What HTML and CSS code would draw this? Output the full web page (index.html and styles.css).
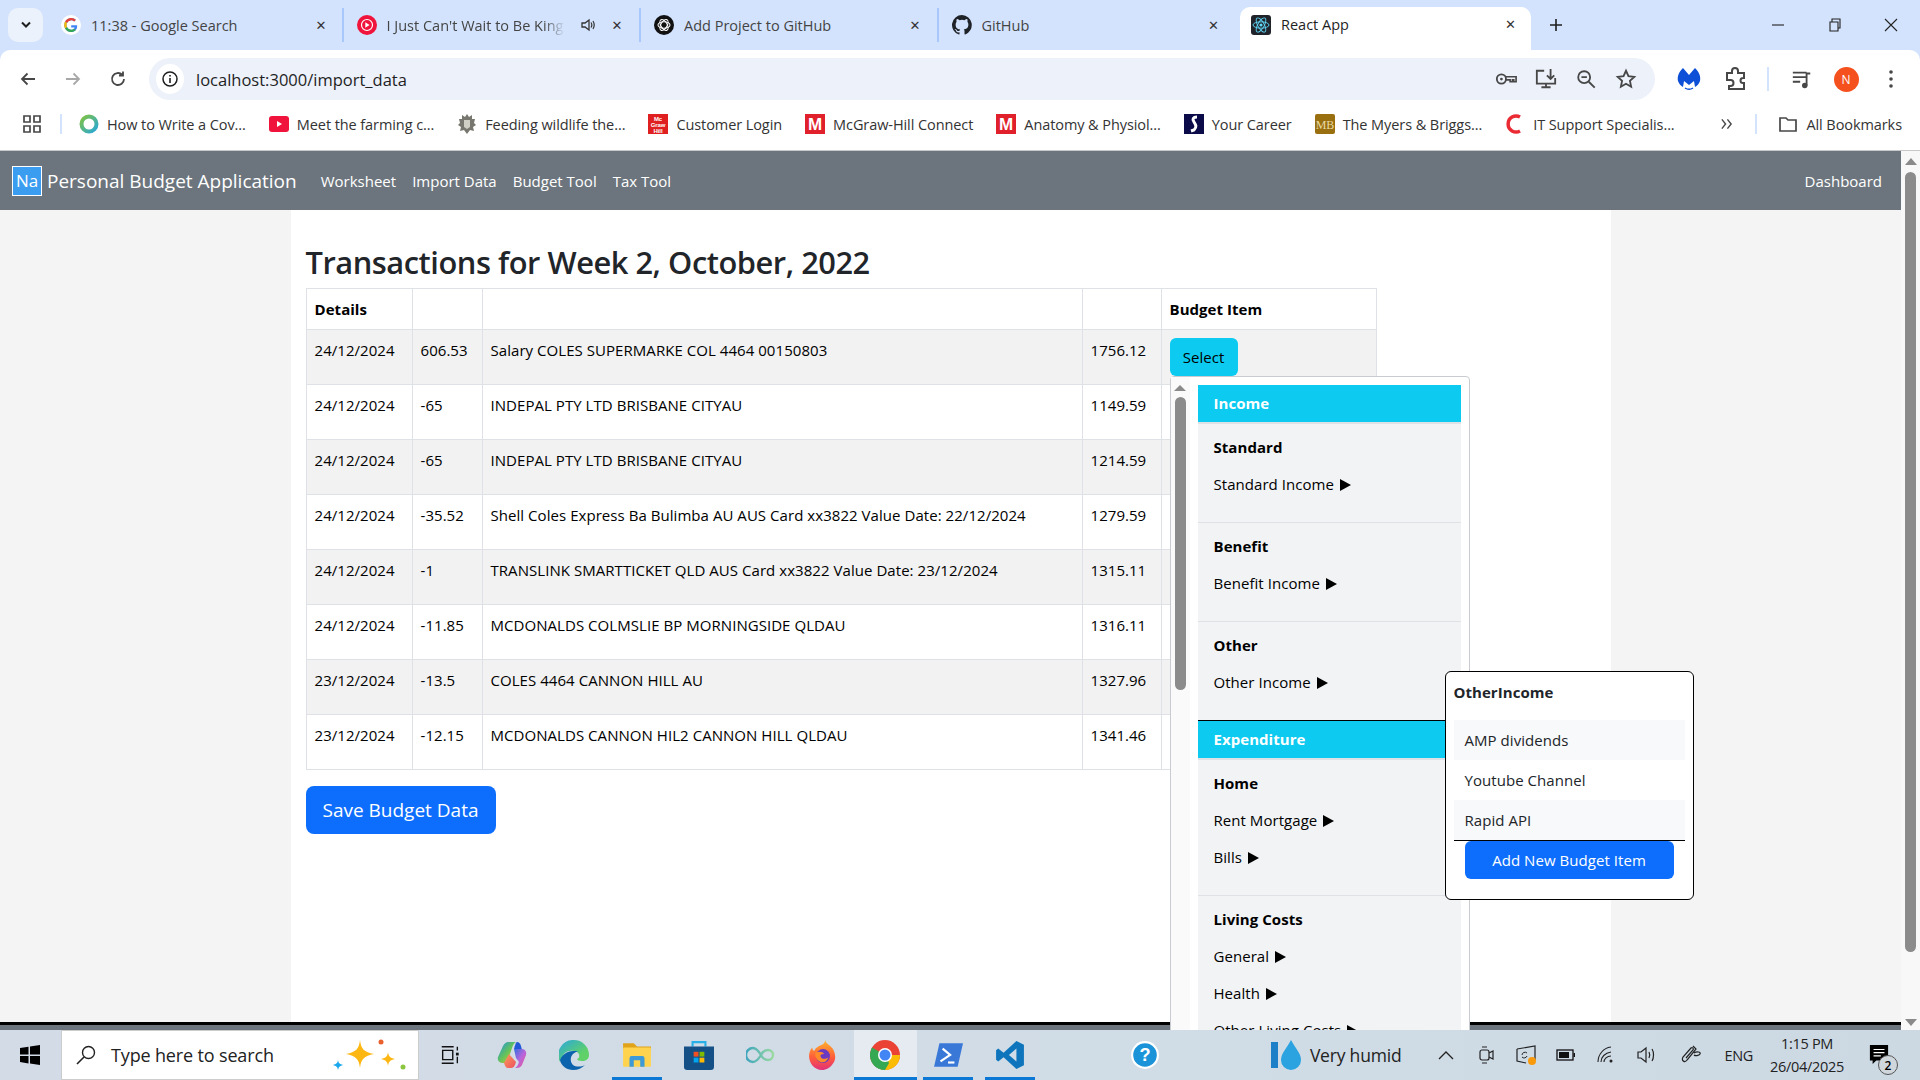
FILE: index.html
```html
<!DOCTYPE html>
<html lang="en">
<head>
  <meta charset="UTF-8">
  <title>React App</title>
  <link rel="stylesheet" href="styles.css">
</head>
<body>

<div class="tabstrip">
  <div class="tab-search"><svg width="12" height="8" viewBox="0 0 12 8"><path d="M2 1.500l4 4 4-4" fill="none" stroke="#1f1f1f" stroke-width="2"/></svg></div>
  <div class="tab">
    <svg class="fav" viewBox="0 0 20 20"><circle cx="10" cy="10" r="10" fill="#fff"/><path d="M16 10.200H10.200v2.200h3.400c-.4 1.500-1.700 2.300-3.400 2.300a4.700 4.700 0 1 1 3-8.300l1.700-1.600A7 7 0 1 0 10.200 17c3.600 0 6-2.500 6-6 0-.3 0-.6-.2-.8z" fill="#4285f4"/><path d="M4 6.500l2 1.500a4.700 4.700 0 0 1 7.200-1.600l1.700-1.600A7 7 0 0 0 4 6.500z" fill="#ea4335"/><path d="M4 13.500l2-1.500a4.700 4.700 0 0 0 7 1.800l1.800 1.500A7 7 0 0 1 4 13.500z" fill="#34a853"/><path d="M3.200 10c0-1.300.3-2.500.8-3.500l2 1.500a4.700 4.700 0 0 0 0 4l-2 1.500c-.5-1-.8-2.200-.8-3.500z" fill="#fbbc05"/></svg>
    <span class="tab-title">11:38 - Google Search</span><span class="tab-x">✕</span>
  </div>
  <div class="tab">
    <svg class="fav" viewBox="0 0 20 20"><circle cx="10" cy="10" r="10" fill="#f0143c"/><circle cx="10" cy="10" r="5.500" fill="none" stroke="#fff" stroke-width="1.200"/><path d="M8.300 7.200l4.300 2.800-4.300 2.800z" fill="#fff"/></svg>
    <span class="tab-title fade">I Just Can't Wait to Be King</span>
    <svg class="tab-sound" viewBox="0 0 16 16"><path d="M2 6h3l4-3v10l-4-3H2z" fill="none" stroke="#333" stroke-width="1.300"/><path d="M11 5.500c1 1.500 1 3.500 0 5M13 4c1.500 2.500 1.500 5.500 0 8" fill="none" stroke="#333" stroke-width="1.200"/></svg>
    <span class="tab-x">✕</span>
  </div>
  <div class="tab">
    <svg class="fav" viewBox="0 0 20 20"><circle cx="10" cy="10" r="10" fill="#111"/><g fill="none" stroke="#fff" stroke-width="1.100"><ellipse cx="10" cy="10" rx="6" ry="3.200"/><ellipse cx="10" cy="10" rx="6" ry="3.200" transform="rotate(60 10 10)"/><ellipse cx="10" cy="10" rx="6" ry="3.200" transform="rotate(120 10 10)"/></g></svg>
    <span class="tab-title">Add Project to GitHub</span><span class="tab-x">✕</span>
  </div>
  <div class="tab">
    <svg class="fav" viewBox="0 0 16 16"><path fill="#1f2328" d="M8 0a8 8 0 0 0-2.500 15.600c.4.100.5-.2.500-.4v-1.400c-2.200.5-2.700-1-2.700-1-.4-.9-.9-1.200-.9-1.200-.7-.5.100-.5.100-.5.800.1 1.200.8 1.200.8.700 1.200 1.900.9 2.300.7.100-.5.300-.9.500-1.100-1.800-.2-3.600-.9-3.600-4 0-.9.300-1.600.8-2.100-.1-.2-.4-1 .1-2.100 0 0 .7-.2 2.200.8a7.600 7.600 0 0 1 4 0c1.500-1 2.200-.8 2.200-.8.400 1.100.2 1.900.1 2.100.5.600.8 1.300.8 2.100 0 3.100-1.900 3.700-3.700 3.900.3.300.6.800.6 1.500v2.200c0 .2.100.5.600.4A8 8 0 0 0 8 0z"/></svg>
    <span class="tab-title">GitHub</span><span class="tab-x">✕</span>
  </div>
  <div class="tab tab-active">
    <svg class="fav" viewBox="0 0 20 20"><rect width="20" height="20" rx="3" fill="#20232a"/><g fill="none" stroke="#61dafb" stroke-width=".9"><ellipse cx="10" cy="10" rx="8" ry="3.200"/><ellipse cx="10" cy="10" rx="8" ry="3.200" transform="rotate(60 10 10)"/><ellipse cx="10" cy="10" rx="8" ry="3.200" transform="rotate(120 10 10)"/></g><circle cx="10" cy="10" r="1.600" fill="#61dafb"/></svg>
    <span class="tab-title">React App</span><span class="tab-x">✕</span>
  </div>
  <svg class="new-tab" viewBox="0 0 14 14"><path d="M7 1v12M1 7h12" stroke="#1f1f1f" stroke-width="1.600"/></svg>
  <div class="win-btns">
    <svg viewBox="0 0 14 14"><path d="M1 7h12" stroke="#222" stroke-width="1.100"/></svg>
    <svg viewBox="0 0 14 14"><path d="M2 4h8v9H2zM4 4V1h8v9h-2" fill="none" stroke="#222" stroke-width="1.100"/></svg>
    <svg viewBox="0 0 14 14"><path d="M1 1l12 12M13 1L1 13" stroke="#222" stroke-width="1.100"/></svg>
  </div>
</div>

<div class="toolbar">
  <svg class="tool-icon" viewBox="0 0 18 18"><path d="M16 9H3M8.500 3.500L3 9l5.500 5.500" fill="none" stroke="#474747" stroke-width="1.800"/></svg>
  <svg class="tool-icon" viewBox="0 0 18 18"><path d="M2 9h13M9.500 3.500L15 9l-5.500 5.500" fill="none" stroke="#a8a8a8" stroke-width="1.800"/></svg>
  <svg class="tool-icon" viewBox="0 0 18 18"><path d="M15 9a6 6 0 1 1-1.800-4.300M14 1.500v4h-4" fill="none" stroke="#474747" stroke-width="1.800"/></svg>
  <div class="omnibox">
    <div class="site-info"><svg width="18" height="18" viewBox="0 0 18 18"><circle cx="9" cy="9" r="7" fill="none" stroke="#1f1f1f" stroke-width="1.500"/><path d="M9 8v5M9 5v1.600" stroke="#1f1f1f" stroke-width="1.600"/></svg></div>
    <span class="url">localhost:3000/import_data</span>
    <div class="omni-icons">
      <svg viewBox="0 0 24 24"><circle cx="7" cy="12" r="5" fill="none" stroke="#474747" stroke-width="2"/><circle cx="7" cy="12" r="1.500" fill="#474747"/><path d="M12 9.500h11v5.500h-2.500v-2h-1.500v2h-2.500v-2H12" fill="none" stroke="#474747" stroke-width="1.800"/></svg>
      <svg viewBox="0 0 24 24"><path d="M10 3H2v14h20v-6M7 21h10M12 17v4M17 1v11M13 8l4 4 4-4" fill="none" stroke="#474747" stroke-width="2"/></svg>
      <svg viewBox="0 0 24 24"><circle cx="10" cy="10" r="6.500" fill="none" stroke="#474747" stroke-width="2"/><path d="M15 15l6.500 6.500M7 10h6" stroke="#474747" stroke-width="2"/></svg>
      <svg viewBox="0 0 24 24"><path d="M12 3l2.700 6 6.300.7-4.700 4.300 1.300 6.500-5.600-3.300-5.600 3.300 1.300-6.500L3 9.700 9.300 9z" fill="none" stroke="#474747" stroke-width="2"/></svg>
    </div>
  </div>
  <div class="ext-icons">
    <svg class="ext-mb" viewBox="0 0 24 24"><path d="M6 1C2 5 0 9 1 14c1 3 3 5 5 6l1-6 5 4 5-4 1 6c2-1 4-3 5-6 1-5-1-9-5-13l-6 7z" fill="#0d4fd6"/><path d="M8 21c3 2 5 2 8 0" fill="none" stroke="#0d4fd6" stroke-width="1.500"/></svg>
    <svg class="ext-puzzle" viewBox="0 0 24 24"><path d="M3 6h5V4a3 3 0 0 1 6 0v2h6v5h-1a2.500 2.500 0 0 0 0 5h1v6H5v-3h1.500a3 3 0 0 0 0-6H3z" fill="none" stroke="#474747" stroke-width="2"/></svg>
    <span class="tool-sep"></span>
    <svg class="ext-queue" viewBox="0 0 24 24"><path d="M2 5h15M2 10h15M2 15h8" stroke="#474747" stroke-width="2"/><circle cx="15" cy="19" r="3" fill="#474747"/><path d="M17 19V6h4" fill="none" stroke="#474747" stroke-width="2"/></svg>
    <span class="avatar">N</span>
    <svg class="ext-menu" viewBox="0 0 6 20"><circle cx="3" cy="3" r="1.800" fill="#474747"/><circle cx="3" cy="10" r="1.800" fill="#474747"/><circle cx="3" cy="17" r="1.800" fill="#474747"/></svg>
  </div>
</div>

<div class="bookmarks">
  <svg class="bm-apps" viewBox="0 0 18 18"><path d="M1 1h6v6H1zM11 1h6v6h-6zM1 11h6v6H1zM11 11h6v6h-6z" fill="none" stroke="#474747" stroke-width="1.700"/></svg>
  <span class="bm-sep"></span>
  <div class="bm"><svg viewBox="0 0 20 20"><defs><linearGradient id="ring" x1="0" y1="0" x2="1" y2="1"><stop offset="0" stop-color="#7fc241"/><stop offset="1" stop-color="#29a8d8"/></linearGradient></defs><circle cx="10" cy="10" r="7.500" fill="none" stroke="url(#ring)" stroke-width="4"/></svg>How to Write a Cov...</div>
  <div class="bm"><svg viewBox="0 0 20 20"><rect y="2" width="20" height="16" rx="3" fill="#f0143c"/><path d="M8 7l5 3-5 3z" fill="#fff"/></svg>Meet the farming c...</div>
  <div class="bm"><svg viewBox="0 0 20 20"><path d="M10 0l2 3 3-2 0 4 3 0-1 4 2 2-3 2 1 4-4-1-3 4-3-4-4 1 1-4-3-2 2-2-1-4 3 0 0-4 3 2z" fill="#77776f"/><path d="M7 6h6v7l-3 2-3-2z" fill="#cfcfc6"/></svg>Feeding wildlife the...</div>
  <div class="bm"><svg viewBox="0 0 20 20"><rect width="20" height="20" fill="#e02020"/><text x="10" y="7" class="bm-mini">Mc</text><text x="10" y="13" class="bm-mini">Graw</text><text x="10" y="19" class="bm-mini">Hill</text></svg>Customer Login</div>
  <div class="bm"><svg viewBox="0 0 20 20"><rect width="20" height="20" fill="#e0202a"/><text x="10" y="16" class="bm-letter">M</text></svg>McGraw-Hill Connect</div>
  <div class="bm"><svg viewBox="0 0 20 20"><rect width="20" height="20" fill="#e0202a"/><text x="10" y="16" class="bm-letter">M</text></svg>Anatomy &amp; Physiol...</div>
  <div class="bm"><svg viewBox="0 0 20 20"><rect width="20" height="20" fill="#0b0b4a"/><path d="M13 3c-4 0-5 2-3 5s3 5 0 8l-3 1" fill="none" stroke="#fff" stroke-width="3"/></svg>Your Career</div>
  <div class="bm"><svg viewBox="0 0 20 20"><rect width="20" height="20" rx="2" fill="#9a6f10"/><text x="10" y="14.500" class="bm-mb">MB</text></svg>The Myers &amp; Briggs...</div>
  <div class="bm"><svg viewBox="0 0 20 20"><path d="M15 3a8 8 0 1 0 0 14" fill="none" stroke="#ea2b33" stroke-width="3.500"/></svg>IT Support Specialis...</div>
  <svg class="bm-more" viewBox="0 0 14 12"><path d="M2 1l4 5-4 5M8 1l4 5-4 5" fill="none" stroke="#474747" stroke-width="1.500"/></svg>
  <span class="bm-sep"></span>
  <div class="bm bm-all"><svg viewBox="0 0 20 20"><path d="M2 4h6l2 2h8v11H2z" fill="none" stroke="#474747" stroke-width="1.700"/></svg>All Bookmarks</div>
</div>

<div class="viewport">
  <div class="app">
    <nav class="navbar">
      <div class="brand">
        <div class="brand-logo"><span>Na</span></div>
        Personal Budget Application
      </div>
      <a>Worksheet</a>
      <a>Import Data</a>
      <a>Budget Tool</a>
      <a>Tax Tool</a>
      <a class="nav-right">Dashboard</a>
    </nav>

    <div class="page">
      <div class="container">
        <h2>Transactions for Week 2, October, 2022</h2>
        <table class="tx-table">
          <colgroup>
            <col class="c-date"><col class="c-amt"><col class="c-desc"><col class="c-bal"><col class="c-item">
          </colgroup>
          <thead>
            <tr><th>Details</th><th></th><th></th><th></th><th>Budget Item</th></tr>
          </thead>
          <tbody>
            <tr><td>24/12/2024</td><td>606.53</td><td>Salary COLES SUPERMARKE COL 4464 00150803</td><td>1756.12</td>
              <td class="item-cell">
                <button class="btn-select">Select</button>
                <div class="dropdown">
                  <div class="fake-scroll">
                    <svg width="14" height="8" viewBox="0 0 14 8"><path d="M7 1l6 6H1z" fill="#8a8a8a"/></svg>
                    <div class="fake-thumb"></div>
                  </div>
                  <div class="menu">
                    <div class="menu-head">Income</div>
                    <div class="menu-group">
                      <div class="group-title">Standard</div>
                      <div class="group-link">Standard Income <i class="tri"></i></div>
                    </div>
                    <div class="menu-group">
                      <div class="group-title">Benefit</div>
                      <div class="group-link">Benefit Income <i class="tri"></i></div>
                    </div>
                    <div class="menu-group menu-group-last">
                      <div class="group-title">Other</div>
                      <div class="group-link">Other Income <i class="tri"></i></div>
                    </div>
                    <div class="menu-head menu-head-line">Expenditure</div>
                    <div class="menu-group">
                      <div class="group-title">Home</div>
                      <div class="group-link">Rent Mortgage <i class="tri"></i></div>
                      <div class="group-link">Bills <i class="tri"></i></div>
                    </div>
                    <div class="menu-group">
                      <div class="group-title">Living Costs</div>
                      <div class="group-link">General <i class="tri"></i></div>
                      <div class="group-link">Health <i class="tri"></i></div>
                      <div class="group-link">Other Living Costs <i class="tri"></i></div>
                    </div>
                  </div>
                </div>
                <div class="subpop">
                  <div class="subpop-title">OtherIncome</div>
                  <div class="subpop-item odd">AMP dividends</div>
                  <div class="subpop-item">Youtube Channel</div>
                  <div class="subpop-item odd last">Rapid API</div>
                  <button class="btn-add">Add New Budget Item</button>
                </div>
              </td>
            </tr>
            <tr><td>24/12/2024</td><td>-65</td><td>INDEPAL PTY LTD BRISBANE CITYAU</td><td>1149.59</td><td></td></tr>
            <tr><td>24/12/2024</td><td>-65</td><td>INDEPAL PTY LTD BRISBANE CITYAU</td><td>1214.59</td><td></td></tr>
            <tr><td>24/12/2024</td><td>-35.52</td><td>Shell Coles Express Ba Bulimba AU AUS Card xx3822 Value Date: 22/12/2024</td><td>1279.59</td><td></td></tr>
            <tr><td>24/12/2024</td><td>-1</td><td>TRANSLINK SMARTTICKET QLD AUS Card xx3822 Value Date: 23/12/2024</td><td>1315.11</td><td></td></tr>
            <tr><td>24/12/2024</td><td>-11.85</td><td>MCDONALDS COLMSLIE BP MORNINGSIDE QLDAU</td><td>1316.11</td><td></td></tr>
            <tr><td>23/12/2024</td><td>-13.5</td><td>COLES 4464 CANNON HILL AU</td><td>1327.96</td><td></td></tr>
            <tr><td>23/12/2024</td><td>-12.15</td><td>MCDONALDS CANNON HIL2 CANNON HILL QLDAU</td><td>1341.46</td><td></td></tr>
          </tbody>
        </table>
        <button class="btn-save">Save Budget Data</button>
      </div>
    </div>

    <div class="footer-bar"></div>
  </div>

  <div class="scrollbar">
    <svg width="14" height="9" viewBox="0 0 14 9"><path d="M7 1l6 7H1z" fill="#8a8a8a"/></svg>
    <div class="scroll-thumb"></div>
    <svg width="14" height="9" viewBox="0 0 14 9"><path d="M7 8l6-7H1z" fill="#8a8a8a"/></svg>
  </div>
</div>

<div class="taskbar">
  <svg class="tb-win" viewBox="0 0 20 20"><path d="M0 3l8.500-1.300v7.800H0zM10 1.500L20 0v9.500H10zM0 11h8.500v7.500L0 17zM10 11h10v9l-10-1.500z" fill="#000"/></svg>
  <div class="tb-search">
    <svg width="22" height="22" viewBox="0 0 22 22"><circle cx="13.500" cy="8.500" r="6" fill="none" stroke="#222" stroke-width="1.400"/><path d="M9 13l-7 7" stroke="#222" stroke-width="1.600"/></svg>
    <span>Type here to search</span>
    <svg class="tb-sparks" width="76" height="40" viewBox="0 0 76 40"><path d="M28 5c1 9 4 12 14 14-10 2-13 5-14 14-1-9-4-12-14-14 10-2 13-5 14-14z" fill="#fcb712"/><path d="M56 17c.5 4 2 6 7 7-5 1-6.500 3-7 7-.5-4-2-6-7-7 5-1 6.500-3 7-7z" fill="#fcb712"/><path d="M6 25c.5 3 1.500 4 5 5-3.500 1-4 2-5 5-.5-3-1.500-4-5-5 3.500-1 4.500-2 5-5z" fill="#1aa7ec"/><circle cx="49" cy="7" r="2.500" fill="#e8602c"/><circle cx="71" cy="32" r="2.500" fill="#8cc63f"/></svg>
  </div>
  <div class="tb-apps">
    <div class="tb-app"><svg class="tb-small" viewBox="0 0 24 24"><path d="M3 3h13M3 21h13M4 7h11v10H4zM20 3v4M20 14v7" fill="none" stroke="#111" stroke-width="1.500"/><rect x="18.500" y="9.500" width="3" height="3" fill="#111"/></svg></div>
    <div class="tb-app"><svg viewBox="0 0 30 30"><defs><linearGradient id="cp" x1="0" y1="0" x2="1" y2="1"><stop offset="0" stop-color="#1f8fe8"/><stop offset=".5" stop-color="#63c35a"/><stop offset="1" stop-color="#f4c22c"/></linearGradient><linearGradient id="cp2" x1="0" y1="0" x2="1" y2="1"><stop offset="0" stop-color="#2f6fe0"/><stop offset=".5" stop-color="#b765dd"/><stop offset="1" stop-color="#f0568a"/></linearGradient><linearGradient id="cp3" x1="0" y1="0" x2="1" y2="1"><stop offset="0" stop-color="#f8a05a"/><stop offset="1" stop-color="#ef4d5e"/></linearGradient></defs><path d="M11 2h8c-2 1-3 3-4 6l-5 15H5c-3 0-5-3-4-6L6 6c1-2 3-4 5-4z" fill="url(#cp)"/><path d="M20 2c2 0 3 1 4 4l1 4h-5l-3-1c1-4 2-7 3-7z" fill="#2159d8"/><path d="M17 9h8c3 0 5 3 4 6l-4 10c-1 2-3 3-5 3h-2c2-1 3-3 4-6l-3-4z" fill="url(#cp2)"/><path d="M12 14l7 8c-1 3-2 6-5 6h-3c-2 0-3-2-4-5z" fill="url(#cp3)"/></svg></div>
    <div class="tb-app"><svg viewBox="0 0 30 30"><defs><linearGradient id="eg" x1="0" y1="0" x2="1" y2="1"><stop offset="0" stop-color="#2aa6de"/><stop offset=".7" stop-color="#5fd168"/></linearGradient></defs><path d="M15 0a15 15 0 0 1 15 15c0 4-3 6-7 6-3 0-5-1-5-2 3-1 3-5 0-7-4-2-10-2-13 2C3 17 2 20 1 22A15 15 0 0 1 15 0z" fill="url(#eg)"/><path d="M14 11c-6 0-11 4-13 9 1 6 7 10 13 10 5 0 9-2 12-5-4 2-9 2-12 0-3-3-3-8 0-11 1-1 3-2 5-3z" fill="#0c63ad"/></svg></div>
    <div class="tb-app tb-open"><svg viewBox="0 0 28 28"><path d="M1 3h10l3 3h13v3H1z" fill="#e0a31a"/><rect x="1" y="7" width="26" height="18" rx="1" fill="#ffd34e"/><path d="M7 25v-8a2 2 0 0 1 2-2h10a2 2 0 0 1 2 2v8h-4v-6h-6v6z" fill="#3d9ad6"/></svg></div>
    <div class="tb-app"><svg viewBox="0 0 28 28"><path d="M8 6V2h12v4" fill="none" stroke="#29b0e8" stroke-width="2"/><path d="M0 6h28v19a3 3 0 0 1-3 3H3a3 3 0 0 1-3-3z" fill="#144f86"/><rect x="9" y="11" width="4.500" height="4.500" fill="#f25022"/><rect x="14.500" y="11" width="4.500" height="4.500" fill="#7fba00"/><rect x="9" y="16.500" width="4.500" height="4.500" fill="#00a4ef"/><rect x="14.500" y="16.500" width="4.500" height="4.500" fill="#ffb900"/></svg></div>
    <div class="tb-app"><svg viewBox="0 0 30 30"><defs><linearGradient id="inf" x1="0" y1="0" x2="1" y2="0"><stop offset="0" stop-color="#3da5bd"/><stop offset="1" stop-color="#9ad9a0"/></linearGradient></defs><path d="M15 15c-3-5-5-7-8-7a7 7 0 0 0 0 14c3 0 5-2 8-7 2-4 4-5 7-5a5 5 0 0 1 0 10c-3 0-5-1-7-5z" fill="none" stroke="url(#inf)" stroke-width="2.400"/></svg></div>
    <div class="tb-app"><svg viewBox="0 0 28 28"><defs><linearGradient id="ff" x1="0" y1="0" x2="0" y2="1"><stop offset="0" stop-color="#ffb52a"/><stop offset=".6" stop-color="#ff5a3c"/><stop offset="1" stop-color="#e0307a"/></linearGradient></defs><path d="M16 0c1 4 4 4 7 8 3 5 3 10 1 13-3 5-7 7-11 7C6 28 1 22 1 15c0-3 1-6 3-8 0 2 1 3 2 3 1-3 4-4 6-5 2-1 4-2 4-5z" fill="url(#ff)"/><circle cx="14" cy="15" r="6.500" fill="#6a3ac0"/><path d="M7 12c3-2 7-1 8 1-3 0-4 1-3 3s5 2 7 0c-1 4-5 6-8 4-3-1-5-5-4-8z" fill="#ff8a2a"/></svg></div>
    <div class="tb-app tb-active"><svg viewBox="0 0 30 30"><circle cx="15" cy="15" r="15" fill="#ea4335"/><path d="M15 15L2 7.500A15 15 0 0 0 9 28.800z" fill="#34a853"/><path d="M15 15l-6 13.800A15 15 0 0 0 30 15z" fill="#fbbc05"/><path d="M15 15L4 25A15 15 0 0 0 15 30l4-7z" fill="#34a853"/><circle cx="15" cy="15" r="7" fill="#fff"/><circle cx="15" cy="15" r="5.500" fill="#4285f4"/></svg></div>
    <div class="tb-app tb-open"><svg viewBox="0 0 28 28"><path d="M6 3h22l-5 22H1z" fill="#3a78d8"/><path d="M9 8l7 6-9 6" fill="none" stroke="#fff" stroke-width="2"/><path d="M14 21h6" stroke="#fff" stroke-width="2"/></svg></div>
    <div class="tb-app tb-open"><svg viewBox="0 0 28 28"><path d="M20 1l7 3.500v19L20 27 8 16l-5 4-2-1.500V9.500L3 8l5 4zM20 8l-7 6 7 6z" fill="#0e75bc"/></svg></div>
    <div class="tb-app tb-gap"><svg viewBox="0 0 28 28"><circle cx="14" cy="14" r="13" fill="#fff"/><circle cx="14" cy="14" r="11" fill="#1b93d8"/><text x="14" y="20" class="tb-help">?</text></svg></div>
  </div>
  <div class="tray">
    <svg class="tray-drop" viewBox="0 0 30 30"><rect x="0" y="2" width="7" height="26" fill="#1c7fc8"/><path d="M20 0c4 8 10 13 10 20a10 10 0 0 1-20 0c0-7 6-12 10-20z" fill="#2ba3e0"/></svg>
    <span class="tray-weather">Very humid</span>
    <svg class="tray-i" viewBox="0 0 20 20"><path d="M3 14l7-7 7 7" fill="none" stroke="#222" stroke-width="1.300"/></svg>
    <svg class="tray-i" viewBox="0 0 20 20"><rect x="4" y="5" width="9" height="10" rx="2" fill="none" stroke="#222" stroke-width="1.200"/><path d="M13 8l4-2v8l-4-2M6 2h5M6 18h5" fill="none" stroke="#222" stroke-width="1.200"/></svg>
    <svg class="tray-i" viewBox="0 0 20 20"><path d="M1 4l18-3v14M1 4v12l9 2" fill="none" stroke="#222" stroke-width="1.200"/><path d="M6 10a3 3 0 0 1 5-2M11 11a3 3 0 0 1-5 1" fill="none" stroke="#222"/><circle cx="16" cy="16" r="4" fill="#f99a0c"/></svg>
    <svg class="tray-i" viewBox="0 0 20 20"><rect x="1" y="5" width="16" height="10" fill="none" stroke="#111" stroke-width="1.300"/><rect x="3" y="7" width="10" height="6" fill="#111"/><rect x="17.500" y="8" width="1.500" height="4" fill="#111"/></svg>
    <svg class="tray-i" viewBox="0 0 20 20"><path d="M2 17C2 10 7 3 15 2M5 17c0-5 4-9 10-10M8 17c0-3 3-6 7-6" fill="none" stroke="#222" stroke-width="1.100"/><circle cx="15" cy="16" r="1.500" fill="#222"/></svg>
    <svg class="tray-i tray-vol" viewBox="0 0 20 20"><path d="M2 7h3l5-4v14l-5-4H2z" fill="none" stroke="#222" stroke-width="1.200"/><path d="M13 7c1 2 1 4 0 6M16 4c2 3 2 9 0 12" fill="none" stroke="#222" stroke-width="1.200"/></svg>
    <svg class="tray-i tray-pen" viewBox="0 0 20 20"><path d="M12 1l3 3-9 11c-2 3-6 1-4-3l8-9c1-1 3 0 2 2l-7 8M13 8c3-2 7-1 6 1s-5 2-6 1" fill="none" stroke="#222" stroke-width="1.200"/></svg>
    <span class="tray-lang">ENG</span>
    <div class="tray-clock"><span>1:15 PM</span><span>26/04/2025</span></div>
    <div class="tray-notify">
      <svg width="20" height="21" viewBox="0 0 22 23"><path d="M1 1h20v17H8l-4 4v-4H1z" fill="#000"/><path d="M5 6h12M5 9.500h12M5 13h8" stroke="#fff" stroke-width="1.300"/></svg>
      <span class="notify-badge">2</span>
    </div>
  </div>
</div>

</body>
</html>
```

FILE: styles.css
```css
* {
  box-sizing: border-box;
}
html, body {
  margin: 0;
  height: 100%;
}
body {
  width: 1920px;
  height: 1080px;
  overflow: hidden;
  display: flex;
  flex-direction: column;
  font-family: "Open Sans", "Noto Sans", sans-serif;
  font-size: 15px;
  color: #000;
  background: #d3e3fd;
}

/* browser tabs */
.tabstrip {
  height: 50px;
  background: #d3e3fd;
  display: flex;
  align-items: flex-start;
  padding: 8px 0 0 8px;
  flex-shrink: 0;
}
.tab-search {
  width: 35px;
  height: 34px;
  background: #ecf2fc;
  border-radius: 10px;
  display: flex;
  align-items: center;
  justify-content: center;
  margin-right: 3px;
}
.tab {
  width: 297.500px;
  height: 34px;
  display: flex;
  align-items: center;
  padding: 0 17px 0 13px;
  border-right: 2px solid #a8c7fa;
  font-size: 14.500px;
  color: #444;
}
.tab:nth-of-type(2) {
  padding: 0 15px 0 15px;
}
.tab:nth-of-type(3) {
  padding-right: 13px;
}
.tab:nth-of-type(4) {
  padding-right: 16px;
}
.tab:nth-of-type(5) {
  border-right: none;
}
.tab-active {
  width: 291px;
  height: 43px;
  margin: -1px 0 0 4px;
  background: #fff;
  border-radius: 10px 10px 0 0;
  border-right: none;
  color: #1f1f1f;
  padding: 0 15px 8px 11px;
}
.fav {
  width: 20px;
  height: 20px;
  flex-shrink: 0;
  margin-right: 10px;
}
.tab-title {
  flex: 1;
  white-space: nowrap;
  overflow: hidden;
}
.fade {
  flex: none;
  width: 178px;
  -webkit-mask-image: linear-gradient(90deg, #000 88%, transparent);
  mask-image: linear-gradient(90deg, #000 88%, transparent);
}
.tab-sound {
  width: 16px;
  height: 16px;
  margin: 0 16px 0 15px;
}
.tab-x {
  font-size: 13px;
  color: #333;
  font-family: "DejaVu Sans", sans-serif;
}
.new-tab {
  width: 14px;
  height: 14px;
  margin: 10px 0 0 18px;
}
.win-btns {
  margin-left: auto;
  display: flex;
  gap: 42.500px;
  padding: 10px 22px 0 0;
}
.win-btns svg {
  width: 14px;
  height: 14px;
}

/* address bar */
.toolbar {
  height: 50px;
  flex-shrink: 0;
  background: #fff;
  display: flex;
  align-items: center;
  padding: 8px 0 0 19px;
  border-radius: 10px 10px 0 0;
}
.tool-icon {
  width: 18px;
  height: 18px;
  margin-right: 27px;
}
.tool-icon:nth-child(3) {
  margin-right: 22px;
}
.omnibox {
  width: 1506px;
  height: 42px;
  background: #ecf1fa;
  border-radius: 21px;
  display: flex;
  align-items: center;
  padding: 0 18px 0 7px;
}
.site-info {
  width: 28px;
  height: 30px;
  border-radius: 50%;
  background: #fff;
  display: flex;
  align-items: center;
  justify-content: center;
  margin-right: 12px;
}
.url {
  font-size: 16.500px;
  color: #1f1f1f;
}
.omni-icons {
  margin-left: auto;
  display: flex;
  gap: 18px;
}
.omni-icons svg {
  width: 22px;
  height: 22px;
}
.ext-icons {
  flex: 1;
  display: flex;
  align-items: center;
  padding-left: 22px;
}
.ext-mb {
  width: 24px;
  height: 24px;
  margin-right: 23px;
}
.ext-puzzle {
  width: 24px;
  height: 24px;
  margin-right: 19px;
}
.tool-sep {
  width: 2px;
  height: 24px;
  background: #d3e3fd;
  margin-right: 22px;
}
.ext-queue {
  width: 22px;
  height: 22px;
  margin-right: 20.500px;
}
.avatar {
  width: 25px;
  height: 25px;
  border-radius: 50%;
  background: #f4511e;
  color: #fff;
  font-size: 12px;
  display: flex;
  align-items: center;
  justify-content: center;
  margin-right: 29.500px;
}
.ext-menu {
  width: 6px;
  height: 20px;
}

/* bookmarks */
.bookmarks {
  height: 51px;
  flex-shrink: 0;
  background: #fff;
  border-bottom: 1px solid #c8c8c8;
  display: flex;
  align-items: center;
  padding: 0 18px 2px 23px;
  font-size: 14.500px;
  letter-spacing: -0.08px;
  color: #333;
  white-space: nowrap;
}
.bm-apps {
  width: 18px;
  height: 18px;
}
.bm-sep {
  width: 2px;
  height: 20px;
  background: #d3e3fd;
  margin: 0 17px 0 19px;
}
.bm {
  display: flex;
  align-items: center;
  gap: 8px;
  margin-right: 23px;
}
.bm svg {
  width: 20px;
  height: 20px;
  flex-shrink: 0;
}
.bm-mini {
  font-family: "Liberation Sans", sans-serif;
  font-size: 6px;
  font-weight: bold;
  fill: #fff;
  text-anchor: middle;
}
.bm-letter {
  font-family: "Liberation Sans", sans-serif;
  font-size: 17px;
  font-weight: bold;
  fill: #fff;
  text-anchor: middle;
}
.bm-mb {
  font-family: "Liberation Serif", serif;
  font-size: 12px;
  fill: #e8d9a0;
  text-anchor: middle;
}
.bm-more {
  width: 13px;
  height: 12px;
  margin-left: auto;
}
.bm-more + .bm-sep {
  margin: 0 21px 0 22px;
}
.bm-all {
  margin-right: 0;
}

/* page in the browser */
.viewport {
  flex: 1;
  min-height: 0;
  display: flex;
}
.app {
  flex: 1;
  min-width: 0;
  position: relative;
  overflow: hidden;
  display: flex;
  flex-direction: column;
  background: #f4f4f4;
}
.navbar {
  height: 59px;
  flex-shrink: 0;
  background: #6c757d;
  display: flex;
  align-items: center;
  padding: 0 0 0 12px;
  color: #fff;
  font-size: 15px;
}
.brand {
  display: flex;
  align-items: center;
  font-size: 19px;
  margin-right: 24px;
  gap: 5px;
}
.brand-logo {
  width: 30px;
  height: 30px;
  background: #3a9df0;
  border: 1px solid #fff;
  display: flex;
  align-items: center;
  justify-content: center;
  font-size: 17px;
}
.navbar a {
  margin-right: 16px;
}
.navbar .nav-right {
  margin-left: auto;
  margin-right: 19px;
}
.page {
  flex: 1;
  min-height: 0;
  display: flex;
  justify-content: center;
}
.container {
  width: 1320px;
  background: #fff;
  padding: 27px 15px 0;
}
h2 {
  margin: 0 0 1px;
  font-size: 30.800px;
  font-weight: 600;
  line-height: 50px;
  color: #212529;
  letter-spacing: -0.45px;
  white-space: nowrap;
}
.tx-table {
  width: 1070px;
  table-layout: fixed;
  border-collapse: collapse;
  font-size: 15px;
  letter-spacing: 0.05px;
}
.c-date { width: 106px; }
.c-amt { width: 70px; }
.c-desc { width: 600px; }
.c-bal { width: 79px; }
.c-item { width: 215px; }
.tx-table th, .tx-table td {
  border: 1px solid #dee2e6;
  padding: 8px;
  text-align: left;
  vertical-align: top;
}
.tx-table th {
  height: 41px;
  font-weight: 700;
  line-height: 24px;
}
.tx-table td {
  height: 55px;
  line-height: 24px;
  white-space: nowrap;
}
.tx-table tbody tr:nth-child(odd) td {
  background: #f2f2f2;
}
.item-cell {
  position: relative;
}
.btn-select {
  display: block;
  width: 68px;
  height: 38px;
  background: #0dcaf0;
  color: #000;
  border: none;
  border-radius: 6px;
  font: inherit;
  letter-spacing: inherit;
}
.btn-save {
  display: block;
  width: 190px;
  height: 48px;
  margin-top: 16px;
  background: #0d6efd;
  color: #fff;
  border: none;
  border-radius: 8px;
  font-family: inherit;
  font-size: 19px;
}

/* select menu over the table */
.dropdown {
  position: absolute;
  top: 46px;
  left: 8px;
  width: 300px;
  height: 700px;
  background: #fff;
  border: 1px solid #c8ccd0;
  border-radius: 4px 4px 0 0;
  display: flex;
  z-index: 5;
  padding: 8px 8px 0 0;
}
.fake-scroll {
  width: 19px;
  flex-shrink: 0;
  background: #fafafa;
  margin: -8px 8px 0 0;
  padding-top: 7px;
  display: flex;
  flex-direction: column;
  align-items: center;
  gap: 5px;
}
.fake-thumb {
  width: 11px;
  height: 293px;
  background: #8b8b8b;
  border-radius: 6px;
}
.menu {
  flex: 1;
  min-width: 0;
  background: #f2f3f5;
}
.menu-head {
  height: 39px;
  background: #0dcaf0;
  color: #fff;
  font-weight: 700;
  padding: 0 16px;
  line-height: 37px;
  border-bottom: 2px solid #dee2e6;
}
.menu-head-line {
  height: 40px;
  border-top: 1px solid #000;
}
.menu-group {
  padding: 5px 0 19px;
  border-bottom: 1px solid #dee2e6;
}
.menu-group-last {
  padding-bottom: 18px;
  border-bottom: 1px solid transparent;
}
.group-title {
  height: 37px;
  line-height: 37px;
  padding-left: 16px;
  font-weight: 700;
}
.group-link {
  height: 37px;
  line-height: 37px;
  padding-left: 16px;
}
.tri {
  display: inline-block;
  width: 0;
  height: 0;
  margin-left: 2px;
  border-left: 11px solid #000;
  border-top: 6px solid transparent;
  border-bottom: 6px solid transparent;
  vertical-align: -1px;
}

/* flyout with budget items */
.subpop {
  position: absolute;
  top: 341px;
  left: 283px;
  width: 249px;
  height: 229px;
  background: #fff;
  border: 1px solid #000;
  border-radius: 6px;
  padding: 8px;
  z-index: 6;
  color: #212529;
}
.subpop-title {
  height: 40px;
  font-weight: 700;
  line-height: 24px;
}
.subpop-item {
  height: 40px;
  line-height: 40px;
  padding-left: 11px;
}
.subpop-item.odd {
  background: #f8f9fa;
}
.subpop-item.last {
  height: 41px;
  border-bottom: 1px solid #000;
}
.btn-add {
  display: block;
  width: 209px;
  height: 38px;
  margin-left: 11px;
  background: #0d6efd;
  color: #fff;
  border: none;
  border-radius: 6px;
  font: inherit;
  letter-spacing: inherit;
}

.footer-bar {
  height: 8px;
  flex-shrink: 0;
  margin-top: auto;
  background: #6c757d;
  border-top: 3px solid #000;
  position: relative;
}

/* page scrollbar */
.scrollbar {
  width: 19px;
  flex-shrink: 0;
  background: #f8f8f8;
  display: flex;
  flex-direction: column;
  align-items: center;
  padding: 6px 0 3px;
  gap: 6px;
}
.scroll-thumb {
  width: 11px;
  height: 780px;
  background: #8b8b8b;
  border-radius: 6px;
  margin-bottom: auto;
}

/* windows taskbar */
.taskbar {
  height: 50px;
  flex-shrink: 0;
  background: linear-gradient(90deg, #d3dbe7, #d0dce6 60%, #ccd9e3);
  display: flex;
  align-items: center;
  position: relative;
  z-index: 10;
}
.tb-win {
  width: 20px;
  height: 20px;
  margin: 0 21px 0 20px;
}
.tb-search {
  width: 358px;
  height: 50px;
  background: #fff;
  border: 1px solid #ccc;
  display: flex;
  align-items: center;
  padding-left: 13px;
  font-size: 18px;
  color: #222;
  letter-spacing: -0.15px;
}
.tb-search span {
  margin-left: 14px;
}
.tb-sparks {
  margin-left: auto;
  margin-right: 10px;
}
.tb-apps {
  display: flex;
}
.tb-app {
  width: 62.200px;
  height: 50px;
  display: flex;
  align-items: center;
  justify-content: center;
  position: relative;
}
.tb-app svg {
  width: 30px;
  height: 30px;
}
.tb-app .tb-small {
  width: 22px;
  height: 22px;
}
.tb-open::after, .tb-active::after {
  content: "";
  position: absolute;
  left: 6px;
  right: 6px;
  bottom: 0;
  height: 3px;
  background: #0a78d4;
}
.tb-active {
  background: #e6ebf2;
}
.tb-active::after {
  left: 0;
  right: 0;
}
.tb-gap {
  margin-left: 73px;
}
.tb-help {
  font-family: "Liberation Sans", sans-serif;
  font-size: 17px;
  font-weight: bold;
  fill: #fff;
  text-anchor: middle;
}
.tray {
  margin-left: auto;
  display: flex;
  align-items: center;
  height: 50px;
  padding-right: 24px;
}
.tray-drop {
  width: 30px;
  height: 30px;
  margin-right: 9px;
}
.tray-weather {
  font-size: 17.500px;
  color: #222;
  margin-right: 35px;
  letter-spacing: -0.2px;
}
.tray-i {
  width: 20px;
  height: 20px;
  margin-right: 20px;
}
.tray-vol {
  margin-right: 25px;
}
.tray-pen {
  margin-right: 23px;
}
.tray-lang {
  font-size: 14.500px;
  color: #222;
  letter-spacing: -0.3px;
}
.tray-clock {
  display: flex;
  flex-direction: column;
  align-items: center;
  font-size: 14.500px;
  line-height: 23px;
  color: #222;
  margin-left: 17px;
  letter-spacing: -0.3px;
}
.tray-notify {
  position: relative;
  width: 34px;
  height: 34px;
  margin-left: 18px;
  padding: 6px 0 0 7px;
}
.notify-badge {
  position: absolute;
  right: -2px;
  bottom: -3px;
  width: 20px;
  height: 20px;
  border-radius: 50%;
  background: #cfd6dc;
  border: 1px solid #555;
  font-size: 12px;
  font-weight: 600;
  display: flex;
  align-items: center;
  justify-content: center;
}
```
